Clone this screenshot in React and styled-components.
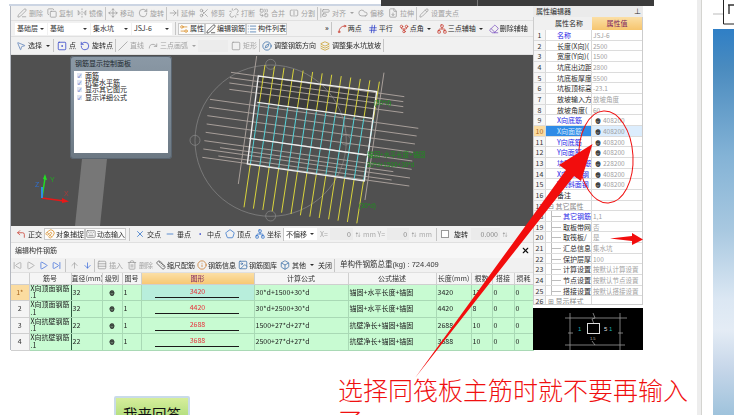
import React from "react";
import styled, { createGlobalStyle } from "styled-components";
import {
  PenLine, Copy, FlipHorizontal2, Move, RotateCw, ArrowRightToLine, Scissors, Unlink, Combine, SplitSquareHorizontal,
  AlignStartVertical, Cloud, FileDown, Pencil, Settings2, Edit3, List, Hash, Spline, GitFork, Eraser, MousePointer2,
  SquareDot, RotateCcw, Slash, Redo, Square, Compass, Layers, CornerUpLeft, Magnet, Keyboard, X, Minus, Dot, Pentagon,
  Network, SkipBack, SkipForward, Play, ArrowUp, ArrowDown, Rows3, Trash2, Ruler, Info, Image, Box,
} from "lucide-react";

const GlobalStyle = createGlobalStyle`
  html, body { margin: 0; padding: 0; background: #fff; }
  body { font-family: "Noto Sans CJK SC", "Liberation Sans", sans-serif; }
`;

const Page = styled.div`
  position: relative;
  display: flex;
  width: 734px;
  height: 415px;
  overflow: hidden;
  background: #fff;
`;

const Workspace = styled.div`
  display: flex;
  flex-direction: column;
  width: 697px;
  flex: none;
`;

const TopStrip = styled.div`
  display: flex;
  height: 6px;
  padding-left: 9px;
  flex: none;
`;

const TopLeft = styled.div`
  width: 372px;
  border-bottom: 2px solid #ccd5e3;
`;

const TopRight = styled.div`
  width: 273px;
  background: linear-gradient(90deg, #3c3c3c 0 96px, #777 96px 97px, #3c3c3c 97px);
`;

const WindowRow = styled.div`
  display: flex;
  padding-left: 10px;
  height: 344px;
  flex: none;
  filter: blur(0.45px);
`;

const AppWindow = styled.div`
  display: flex;
  flex-direction: column;
  width: 523px;
  flex: none;
  box-sizing: border-box;
  border-left: 1px solid #b4b8c0;
  background: #f1f1f1;
  font-size: 7px;
  line-height: 1;
  color: #222;
`;

const ToolRow = styled.div`
  display: flex;
  align-items: center;
  height: ${(p) => p.$h}px;
  flex: none;
  box-sizing: border-box;
  padding-left: ${(p) => p.$pad ?? 3}px;
  background: ${(p) => p.$bg || "#f1f1f1"};
  border-bottom: 1px solid #e0e0e0;
  white-space: nowrap;
`;

const ToolItem = styled.span`
  display: inline-flex;
  align-items: center;
  gap: ${(p) => p.$gap}px;
  padding: 0 ${(p) => p.$pad}px;
  height: 12px;
  flex: none;
  color: ${(p) => (p.$off ? "#a2a2a2" : "#2a2a2a")};
  ${(p) => p.$boxed && "background:#fbfbfb; box-shadow: inset 0 0 0 1px #c9c9c9;"}
  svg { flex: none; }
`;

const Caret = styled.span`
  width: 0;
  height: 0;
  margin-left: 2px;
  border-left: 2px solid transparent;
  border-right: 2px solid transparent;
  border-top: 2px solid currentColor;
`;

const Sep = styled.span`
  width: 1px;
  height: 13px;
  margin: 0 ${(p) => p.$m ?? 1}px;
  background: #c5c5c5;
  flex: none;
`;

const Combo = styled.span`
  display: inline-flex;
  align-items: center;
  justify-content: space-between;
  box-sizing: border-box;
  width: ${(p) => p.$w}px;
  height: 12px;
  margin-right: 1px;
  padding: 0 3px 0 2px;
  background: ${(p) => (p.$off ? "#ececec" : "#fff")};
  color: #333;
  flex: none;
`;

const Chevrons = styled.span`
  margin-left: ${(p) => p.$m}px;
  font-size: 7px;
  font-weight: 700;
  color: #333;
`;

const StatusField = styled.span`
  display: inline-flex;
  align-items: center;
  justify-content: flex-end;
  box-sizing: border-box;
  width: ${(p) => p.$w}px;
  height: 12px;
  margin-left: ${(p) => p.$ml || 0}px;
  padding-right: 2px;
  background: #ebebeb;
  color: #888;
  font-size: 7px;
  flex: none;
`;

const FieldLabel = styled.span`
  color: #aaa;
  margin: 0 2px 0 ${(p) => p.$ml || 0}px;
  flex: none;
`;

const Spin = styled.span`
  color: #888;
  font-size: 5px;
  line-height: 4px;
  width: 10px;
  text-align: center;
  flex: none;
`;

const CheckOutline = styled.span`
  width: 6px;
  height: 6px;
  margin: 0 5px 0 2px;
  background: #fff;
  border: 1px solid #999;
  flex: none;
`;

const Canvas = styled.div`
  position: relative;
  height: 171px;
  flex: none;
  background: #505050;
  svg { display: block; }
`;

const FloatPanel = styled.div`
  position: absolute;
  left: 59px;
  top: 1px;
  width: 102px;
  height: 103px;
  box-sizing: border-box;
  padding: 3px 4px 4px;
  border-radius: 4px;
  background: linear-gradient(180deg, #8b99a6, #75838f 70%, #6c7883);
  box-shadow: inset 0 0 0 1px #5a6570;
`;

const FloatTitle = styled.div`
  height: 12px;
  line-height: 9px;
  color: #20282e;
  padding-left: 1px;
`;

const FloatBody = styled.div`
  height: 82px;
  box-sizing: border-box;
  padding: 1px 3px;
  background: #fff;
`;

const FloatRow = styled.div`
  display: flex;
  align-items: center;
  gap: 3px;
  height: 7.2px;
  color: #222;
`;

const TickBox = styled.span`
  width: 5px;
  height: 5px;
  background: #dfe6f3;
  color: #2a3fb0;
  font-size: 5px;
  line-height: 5px;
  text-align: center;
  flex: none;
`;

const TitleBar = styled.div`
  display: flex;
  align-items: center;
  justify-content: space-between;
  height: 15px;
  flex: none;
  padding: 0 3px 0 4px;
  background: #f7f7f7;
  color: #333;
`;

const TotalWeight = styled.span`
  font-family: "Liberation Sans", "Noto Sans CJK SC", sans-serif;
  font-size: 7.5px;
  color: #333;
  margin-left: 5px;
`;

const Sheet = styled.table`
  width: 522px;
  table-layout: fixed;
  border-collapse: collapse;
  flex: none;
  font-size: 7px;
  color: #222;
`;

const HeadCell = styled.th`
  box-sizing: border-box;
  height: 11px;
  padding: 0;
  font-weight: 400;
  white-space: nowrap;
  overflow: hidden;
  background: ${(p) => (p.$hot ? "linear-gradient(#fbdfa6,#f7c873)" : "#f5f5f5")};
  color: ${(p) => (p.$hot ? "#7c1d5e" : "#333")};
  border-right: 1px solid #cfcfcf;
  border-bottom: 1px solid #cfcfcf;
`;

const RowHead = styled.td`
  box-sizing: border-box;
  height: 16.5px;
  padding: 0;
  text-align: center;
  background: ${(p) => (p.$hot ? "#fbdca0" : "#f4f4f4")};
  color: ${(p) => (p.$hot ? "#a8651c" : "#333")};
  border-right: 1px solid #cfcfcf;
  border-bottom: 1px solid #cfcfcf;
`;

const Cell = styled.td`
  box-sizing: border-box;
  height: 16.5px;
  padding: 0 1px;
  line-height: 7.5px;
  background: ${(p) => (p.$hot ? "#b8eedc" : "#c8fbd2")};
  text-align: ${(p) => (p.$center ? "center" : "left")};
  border-right: 1px solid ${(p) => (p.$dark ? "#2d5a40" : "#a9d9b5")};
  border-bottom: 1px solid #a9d9b5;
  white-space: nowrap;
  overflow: hidden;
`;

const ShapeNumber = styled.div`
  color: #e8303a;
  text-align: center;
  height: 9px;
  line-height: 9px;
`;

const ShapeBar = styled.div`
  height: 1px;
  margin: 1px 14px 0 12px;
  background: #1a1a1a;
`;

const PropPanel = styled.div`
  display: flex;
  flex-direction: column;
  width: 110px;
  flex: none;
  font-size: 7px;
  line-height: 1;
  color: #2a2a2a;
  background: #fff;
`;

const PropTitle = styled.div`
  display: flex;
  align-items: center;
  justify-content: space-between;
  height: 11px;
  padding: 0 2px 0 3px;
  background: #ebebeb;
  flex: none;
`;

const PropHead = styled.div`
  display: grid;
  grid-template-columns: 12px 46px 50px;
  height: 13px;
  flex: none;
  align-items: center;
  text-align: center;
  background: #f0f0f0;
  border-left: 1px solid #ccc;
  border-right: 1px solid #ccc;
  box-sizing: border-box;
`;

const PropHot = styled.span`
  height: 13px;
  line-height: 13px;
  background: linear-gradient(#fbdfa6, #f6c56e);
  color: #7c1d5e;
`;

const PropRows = styled.div`
  height: 275px;
  overflow: hidden;
  flex: none;
  box-sizing: border-box;
  border-left: 1px solid #ccc;
  border-right: 1px solid #ccc;
  border-bottom: 1px solid #ccc;
`;

const PropRow = styled.div`
  display: grid;
  grid-template-columns: 12px 46px 50px;
  height: 10.67px;
  box-sizing: border-box;
  align-items: center;
  border-bottom: 1px solid #dcdcdc;
  white-space: nowrap;
  overflow: hidden;
`;

const PropNum = styled.span`
  height: 100%;
  line-height: 10px;
  text-align: center;
  background: ${(p) => (p.$hot ? "#fbdca0" : "#f6f6f6")};
  color: ${(p) => (p.$hot ? "#a8651c" : "#333")};
  border-right: 1px solid #d8d8d8;
`;

const branchLines = `
  background-image: linear-gradient(#bdbdbd, #bdbdbd), linear-gradient(#bdbdbd, #bdbdbd);
  background-size: 10px 1px, 1px 100%;
  background-position: 5px 5px, 5px 0;
  background-repeat: no-repeat;
`;

const PropName = styled.span`
  height: 100%;
  line-height: 10px;
  box-sizing: border-box;
  overflow: hidden;
  padding-left: ${(p) => p.$indent}px;
  background-color: ${(p) => (p.$hot ? "#2f8be6" : "transparent")};
  ${(p) => p.$branch && branchLines}
  color: ${(p) => (p.$hot ? "#d8ecff" : p.$tone === "blue" ? "#2626e6" : p.$tone === "gray" ? "#888" : "#2a2a2a")};
  border-right: 1px solid #d8d8d8;
`;

const PropValue = styled.span`
  height: 100%;
  line-height: 10px;
  padding-left: 1px;
  font-size: 6.5px;
  background: ${(p) => (p.$hot ? "#dcedfd" : "transparent")};
  color: #a0a0a0;
`;

const GradeMark = styled.b`
  color: #222;
  margin: 0 ${(p) => p.$side || 0}px;
  font-size: 6px;
  -webkit-text-stroke: 0.3px #222;
`;

const Preview = styled.div`
  margin-top: 3px;
  height: 42px;
  flex: none;
  background: #000;
  svg { display: block; }
`;

const BottomRow = styled.div`
  display: flex;
  align-items: flex-start;
  padding-left: 114px;
`;

const AnswerButton = styled.button`
  width: 76px;
  height: 30px;
  margin-top: 46px;
  padding: 5px 0 0;
  flex: none;
  border: 2px solid #c9dbe9;
  border-radius: 2px;
  background: linear-gradient(#d6ee9b, #a5d873);
  color: #111;
  font-family: inherit;
  font-size: 14.5px;
  line-height: 18px;
  text-align: center;
`;

const Remark = styled.p`
  width: 352px;
  margin: 24px 0 0 148px;
  color: #f01010;
  font-size: 25px;
  font-weight: 300;
  line-height: 31px;
  flex: none;
`;

const Divider = styled.div`
  width: 5px;
  flex: none;
  background: #ededed;
  border-right: 1px solid #d4d4d0;
  box-sizing: border-box;
`;

const PhotoColumn = styled.div`
  display: flex;
  flex-direction: column;
  width: 21px;
  margin-left: 11px;
  flex: none;
`;

const PhotoSketch = styled.svg`
  display: block;
  flex: none;
`;

const Photo = styled.div`
  flex: 1;
  background: linear-gradient(180deg, #2f7fc6 0, #4a8bbf 10%, #84b3d6 33%, #a8c8e0 52%, #dbe7f3 70%, #e4ecf5 78%, #c6d6e9 88%, #9fc3dc 100%);
`;

const Overlay = styled.svg`
  position: absolute;
  left: 0;
  top: 0;
  pointer-events: none;
`;

const Tool = ({ icon: Icon, color, label, off, caret, boxed, size = 10, pad = 2, gap = 2 }) => (
  <ToolItem $off={off} $boxed={boxed} $pad={pad} $gap={gap}>
    {Icon && <Icon size={size} strokeWidth={1.8} color={off ? "#9a9a9a" : color || "#444"} />}
    {label}
    {caret && <Caret />}
  </ToolItem>
);

const cols = [18, 42, 31, 20, 19, 113, 94, 88, 35, 21, 22, 19];
const heads = ["", "筋号", "直径(mm)", "级别", "图号", "图形", "计算公式", "公式描述", "长度(mm)", "根数", "搭接", "损耗"];
const rows = [
  ["1*", "X向顶面钢筋", "32", "3420", "30*d+1500+30*d", "锚固+水平长度+锚固", "12"],
  ["2", "X向顶面钢筋", "32", "4420", "30*d+2500+30*d", "锚固+水平长度+锚固", "8"],
  ["3", "X向抗壁钢筋", "22", "2688", "1500+27*d+27*d", "抗壁净长+锚固+锚固", "10"],
  ["4", "X向抗壁钢筋", "22", "3688", "2500+27*d+27*d", "抗壁净长+锚固+锚固", "10"],
];

const props = [
  { name: "名称", value: "JSJ-6", tone: "blue" },
  { name: "长度(X向)(", value: "2500" },
  { name: "宽度(Y向)(", value: "1500" },
  { name: "坑底出边距", value: "2800" },
  { name: "坑底板厚度", value: "5500" },
  { name: "坑板顶标高", value: "-23.1" },
  { name: "放坡输入方", value: "放坡角度" },
  { name: "放坡角度(", value: "60" },
  { name: "X向底筋", value: "408200", tone: "blue", grade: true },
  { name: "X向面筋", value: "408200", tone: "blue", grade: true },
  { name: "Y向底筋", value: "408200", tone: "blue", grade: true },
  { name: "Y向面筋", value: "408200", tone: "blue", grade: true },
  { name: "坑壁水平筋", value: "228200", tone: "blue", grade: true },
  { name: "X向斜面钢", value: "408200", tone: "blue", grade: true },
  { name: "Y向斜面钢", value: "408200", tone: "blue", grade: true },
  { name: "备注", value: "" },
  { name: "⊟ 其它属性", value: "", tone: "gray", indent: 2 },
  { name: "其它钢筋", value: "1,1", tone: "blue", branch: true },
  { name: "取板带网", value: "否", branch: true },
  { name: "取筏板/", value: "是", branch: true },
  { name: "汇总信息", value: "集水坑", branch: true },
  { name: "保护层厚", value: "100", branch: true },
  { name: "计算设置", value: "按默认计算设置", branch: true },
  { name: "节点设置", value: "按默认节点设置", branch: true },
  { name: "搭接设置", value: "按默认搭接设置", branch: true },
  { name: "⊞ 显示样式", value: "", tone: "gray", indent: 2 },
];

const seq = (n) => Array.from({ length: n }, (_, i) => i);

// the rebar drawing, in the coordinates of a 3x crop of the canvas
const RebarDrawing = () => {
  const longTan = [
    [120, 148, 745, 235], [117, 172, 740, 258], [112, 197, 735, 282], [110, 222, 730, 307],
    [107, 247, 727, 333], [103, 272, 725, 358], [100, 297, 720, 384], [97, 322, 718, 408],
    [183, 67, 703, 140], [180, 83, 700, 155], [178, 99, 700, 170], [178, 118, 700, 188],
    [150, 293, 670, 365], [145, 318, 665, 390],
  ];
  const bars = seq(13).map((i) => ({
    x1: 285 + i * 28.6, y1: 45 + i * 4.17, x2: 222 + i * 28.2, y2: 472 + i * 4,
  }));
  const at = (b, t) => [b.x1 + (b.x2 - b.x1) * t, b.y1 + (b.y2 - b.y1) * t];
  return (
    <svg width="522" height="171" viewBox="11 55 522 171">
      <polygon points="85,130 110,130 100,226 75,226" fill="#777" />
      <g transform="translate(170 50) scale(0.3333)" fill="none">
        <polygon points="265,78 620,125 607,205 262,157" fill="#3c3c3c" />
        <circle cx="302" cy="272" r="227" stroke="#8c8c8c" strokeWidth="2" />
        {[[302, 43], [75, 271], [302, 498], [527, 270]].map(([cx, cy]) => (
          <circle key={cx + cy} cx={cx} cy={cy} r="15" stroke="#8c8c8c" strokeWidth="2" />
        ))}
        {longTan.map((l) => (
          <line key={l[1]} x1={l[0]} y1={l[1]} x2={l[2]} y2={l[3]} stroke="#a89f9a" strokeWidth="3" />
        ))}
        <line x1="260" y1="18" x2="205" y2="402" stroke="#a89f9a" strokeWidth="3" />
        <line x1="642" y1="68" x2="585" y2="450" stroke="#a89f9a" strokeWidth="3" />
        {bars.map((b) => {
          const a = at(b, 0.27);
          const c = at(b, 0.7);
          return (
            <g key={b.x1} strokeWidth="3">
              <line x1={b.x1} y1={b.y1} x2={a[0]} y2={a[1]} stroke="#d9d43c" />
              <line x1={a[0]} y1={a[1]} x2={c[0]} y2={c[1]} stroke="#56d3d8" />
              <line x1={c[0]} y1={c[1]} x2={b.x2} y2={b.y2} stroke="#d9d43c" />
            </g>
          );
        })}
        <polygon points="265,78 620,125 583,393 232,342" stroke="#eee" strokeWidth="4" />
        <line x1="262" y1="157" x2="607" y2="205" stroke="#eee" strokeWidth="4" />
        <line x1="238" y1="265" x2="590" y2="315" stroke="#eee" strokeWidth="4" />
        <g fill="#1f8f1f" fontSize="19" fontFamily="Liberation Sans, Noto Sans CJK SC, sans-serif">
          <text x="612" y="166">(30*d)</text>
          <text x="592" y="321">锚固+水平长度+锚固</text>
          <text x="590" y="350">30*d+1500+30*d</text>
          <text x="566" y="474">(30*d)</text>
        </g>
      </g>
      <line x1="42" y1="198" x2="64" y2="201" stroke="#e81818" strokeWidth="1.5" />
      <polygon points="62,198 69,201.5 62,203" fill="#e81818" />
      <line x1="42" y1="198" x2="45" y2="178" stroke="#22e022" strokeWidth="1.5" />
      <polygon points="43,179 45,174 47,180" fill="#22e022" />
      <line x1="42" y1="198" x2="42" y2="187" stroke="#2f8fe0" strokeWidth="2" />
      <g fontSize="7" fontFamily="Liberation Sans, sans-serif">
        <text x="64" y="196" fill="#a83c3c">X</text>
        <text x="50" y="182" fill="#1fae1f">Y</text>
        <text x="35" y="187" fill="#2f6fd0">Z</text>
      </g>
    </svg>
  );
};

const PreviewDrawing = () => (
  <svg width="110" height="42" viewBox="533 308 110 42">
    <g stroke="#9a9a9a" strokeWidth="0.8" fill="none">
      <line x1="565" y1="318" x2="627" y2="318" />
      <line x1="565" y1="345" x2="625" y2="345" />
      <line x1="570" y1="313" x2="570" y2="350" />
      <line x1="620" y1="313" x2="620" y2="350" />
      <path d="M593 313 l2 5 l-3 1 l2 5" />
      <path d="M568 333 h5 M618 333 h5 M592 341 l3 4" />
    </g>
    <rect x="587.5" y="323.5" width="12" height="10" fill="none" stroke="#ddd" strokeWidth="1" />
    <g fontSize="6" fontFamily="Liberation Sans, sans-serif">
      <text x="578" y="331" fill="#19b3b3">1</text>
      <text x="609" y="331" fill="#19b3b3">1</text>
      <text x="604" y="331" fill="#ddd">5</text>
      <text x="590" y="340" fill="#bbb" fontSize="4">1.5</text>
    </g>
  </svg>
);

const App = () => (
  <Page>
    <GlobalStyle />
    <Workspace>
      <TopStrip>
        <TopLeft />
        <TopRight />
      </TopStrip>
      <WindowRow>
        <AppWindow>
          <ToolRow $h={15} $pad={4}>
            <Tool off icon={PenLine} label="删除" />
            <Tool off icon={Copy} label="复制" />
            <Tool off icon={FlipHorizontal2} label="镜像" />
            <Sep $m={0} />
            <Tool off icon={Move} label="移动" />
            <Tool off icon={RotateCw} label="旋转" />
            <Sep $m={0} />
            <Tool off icon={ArrowRightToLine} label="延伸" />
            <Tool off icon={Scissors} label="修剪" />
            <Tool off icon={Unlink} label="打断" />
            <Tool off icon={Combine} label="合并" />
            <Tool off icon={SplitSquareHorizontal} label="分割" />
            <Sep $m={0} />
            <Tool off icon={AlignStartVertical} label="对齐" caret />
            <Tool off icon={Cloud} label="偏移" />
            <Tool off icon={FileDown} label="拉伸" />
            <Sep $m={0} />
            <Tool off icon={Pencil} label="设置夹点" />
          </ToolRow>
          <ToolRow $h={16} $pad={4}>
            <Combo $w={32}>基础层<Caret /></Combo>
            <Combo $w={42}>基础<Caret /></Combo>
            <Combo $w={40}>集水坑<Caret /></Combo>
            <Combo $w={40}>JSJ-6<Caret /></Combo>
            <Sep $m={2} />
            <Tool boxed pad={1} gap={1} icon={Settings2} color="#d98a1e" label="属性" />
            <Tool boxed pad={1} gap={1} icon={Edit3} color="#333" label="编辑钢筋" />
            <Tool boxed pad={1} gap={1} icon={List} color="#3a6ea8" label="构件列表" />
            <Chevrons $m={38}>»</Chevrons>
            <Sep $m={2} />
            <Tool pad={3} gap={1} icon={Spline} color="#c8392b" label="两点" />
            <Tool pad={3} gap={1} icon={Hash} color="#2b3ec8" label="平行" />
            <Tool pad={3} gap={1} icon={GitFork} color="#c8392b" label="点角" caret />
            <Tool pad={3} gap={1} icon={Network} color="#c8392b" label="三点辅轴" caret />
            <Tool pad={3} gap={1} icon={Eraser} color="#7a4fc0" label="删除辅轴" />
            <Chevrons $m={3}>»</Chevrons>
          </ToolRow>
          <ToolRow $h={18} $pad={3}>
            <Tool icon={MousePointer2} color="#5a7fb8" label="选择" caret />
            <Sep />
            <Tool icon={SquareDot} color="#2b3ec8" label="点" />
            <Tool icon={RotateCcw} color="#2b3ec8" label="旋转点" />
            <Sep $m={0} />
            <Tool off icon={Slash} label="直线" />
            <Tool off icon={Redo} label="三点画弧" caret />
            <Combo $w={30} $off />
            <Tool off icon={Square} label="矩形" />
            <Sep $m={0} />
            <Tool icon={Compass} color="#3a6ea8" label="调整钢筋方向" />
            <Tool icon={Layers} color="#c79a1e" label="调整集水坑放坡" />
            <Sep $m={0} />
          </ToolRow>
          <Canvas>
            <RebarDrawing />
            <FloatPanel>
              <FloatTitle>钢筋显示控制面板</FloatTitle>
              <FloatBody>
                {["面筋", "抗壁水平筋", "显示其它图元", "显示详细公式"].map((t) => (
                  <FloatRow key={t}>
                    <TickBox>✓</TickBox>
                    {t}
                  </FloatRow>
                ))}
              </FloatBody>
            </FloatPanel>
          </Canvas>
          <ToolRow $h={17} $pad={3}>
            <Tool icon={CornerUpLeft} color="#c8392b" label="正交" />
            <Tool boxed pad={1} gap={1} icon={Magnet} color="#d98a1e" label="对象捕捉" />
            <Tool boxed pad={1} gap={1} icon={Keyboard} color="#777" label="动态输入" />
            <Sep $m={3} />
            <Tool icon={X} color="#2b6ec8" label="交点" />
            <Tool icon={Minus} color="#2b6ec8" label="垂点" />
            <Tool icon={Dot} color="#2b3ec8" label="中点" />
            <Tool icon={Pentagon} color="#2b6ec8" label="顶点" />
            <Tool icon={Network} color="#2b6ec8" label="坐标" />
            <Sep $m={0} />
            <Combo $w={33}>不偏移<Caret /></Combo>
            <FieldLabel $ml={2}>X=</FieldLabel>
            <StatusField $w={23}>0</StatusField>
            <Spin>⇅</Spin>
            <FieldLabel>mm Y=</FieldLabel>
            <StatusField $w={22}>0</StatusField>
            <Spin>⇅</Spin>
            <FieldLabel>mm</FieldLabel>
            <Sep $m={2} />
            <CheckOutline />
            旋转
            <StatusField $w={29} $ml={3}>0.000</StatusField>
            <Spin>⇅</Spin>
          </ToolRow>
          <TitleBar>
            编辑构件钢筋
            <X size={9} strokeWidth={3} color="#111" />
          </TitleBar>
          <ToolRow $h={15} $pad={0}>
            <Tool off size={9} icon={SkipBack} />
            <Tool off size={9} icon={Play} />
            <Tool size={9} icon={Play} color="#2b5fd8" />
            <Tool size={9} icon={SkipForward} color="#2b5fd8" />
            <Sep $m={2} />
            <Tool off size={9} icon={ArrowUp} />
            <Tool size={9} icon={ArrowDown} color="#2b5fd8" />
            <Sep $m={0} />
            <Tool off icon={Rows3} label="插入" />
            <Tool off icon={Trash2} label="删除" />
            <Tool pad={1} gap={1} icon={Ruler} color="#444" label="缩尺配筋" />
            <Tool pad={1} gap={1} icon={Info} color="#c8792b" label="钢筋信息" />
            <Tool pad={1} gap={1} icon={Image} color="#3a6ea8" label="钢筋图库" />
            <Tool icon={Box} color="#3a6ea8" label="其他" caret />
            <Tool label="关闭" />
            <Sep $m={0} />
            <TotalWeight>单构件钢筋总重(kg) : 724.409</TotalWeight>
          </ToolRow>
          <Sheet>
            <colgroup>
              {cols.map((w, i) => (
                <col key={i} width={w} />
              ))}
            </colgroup>
            <thead>
              <tr>
                {heads.map((h, i) => (
                  <HeadCell key={i} $hot={h === "图形"}>{h}</HeadCell>
                ))}
              </tr>
            </thead>
            <tbody>
              {rows.map((r, i) => (
                <tr key={r[0]}>
                  <RowHead $hot={i === 0}>{r[0]}</RowHead>
                  <Cell $dark>{r[1]}<br />.1</Cell>
                  <Cell>{r[2]}</Cell>
                  <Cell $center><GradeMark>⊕</GradeMark></Cell>
                  <Cell>1</Cell>
                  <Cell $hot={i === 0}>
                    <ShapeNumber>{r[3]}</ShapeNumber>
                    <ShapeBar />
                  </Cell>
                  <Cell>{r[4]}</Cell>
                  <Cell>{r[5]}</Cell>
                  <Cell>{r[3]}</Cell>
                  <Cell>{r[6]}</Cell>
                  <Cell>0</Cell>
                  <Cell>0</Cell>
                </tr>
              ))}
            </tbody>
          </Sheet>
        </AppWindow>
        <PropPanel>
          <PropTitle>
            属性编辑器
            <span>⊥</span>
          </PropTitle>
          <PropHead>
            <span />
            <span>属性名称</span>
            <PropHot>属性值</PropHot>
          </PropHead>
          <PropRows>
            {props.map((p, i) => (
              <PropRow key={i}>
                <PropNum $hot={i === 9}>{i + 1}</PropNum>
                <PropName $hot={i === 9} $tone={p.tone} $branch={p.branch} $indent={p.indent ?? (p.branch ? 17 : 11)}>
                  {p.name}
                </PropName>
                <PropValue $hot={i === 9}>
                  {p.grade && <GradeMark $side={2}>⊕</GradeMark>}
                  {p.value}
                </PropValue>
              </PropRow>
            ))}
          </PropRows>
          <Preview>
            <PreviewDrawing />
          </Preview>
        </PropPanel>
      </WindowRow>
      <BottomRow>
        <AnswerButton>我来回答</AnswerButton>
        <Remark>选择同筏板主筋时就不要再输入了</Remark>
      </BottomRow>
    </Workspace>
    <Divider />
    <PhotoColumn>
      <PhotoSketch width="21" height="29" viewBox="713 0 21 29">
        <rect x="713" y="0" width="21" height="29" fill="#fff" />
        <path d="M713 14 H723" stroke="#bbb" strokeWidth="1" />
        <path d="M723.5 0 V24 H734" stroke="#222" strokeWidth="1" fill="none" />
        <path d="M728 5 H734 M729 5 V14" stroke="#333" strokeWidth="1.4" fill="none" />
      </PhotoSketch>
      <Photo />
    </PhotoColumn>
    <Overlay width="734" height="415" viewBox="0 0 734 415">
      <ellipse cx="606" cy="157" rx="27" ry="46" transform="rotate(-3 606 157)" fill="none" stroke="#f01010" strokeWidth="1" />
      <polygon points="415,378 566,170 559,165 592.5,144 581,181 574,176" fill="#f20d0d" />
      <polygon points="610,238.5 632,236 632,233 643,239.5 632,245 632,241" fill="#f20d0d" />
    </Overlay>
  </Page>
);

export default App;
